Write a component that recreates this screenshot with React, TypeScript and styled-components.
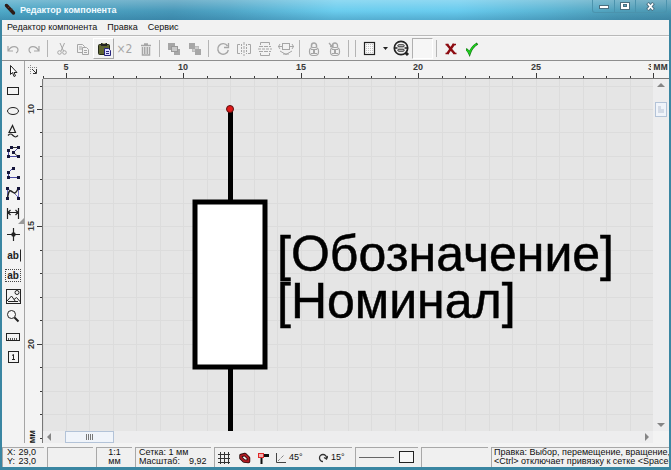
import React, { useEffect, useState } from "react";
import styled, { createGlobalStyle, css } from "styled-components";

const UI_FONT = '"Liberation Sans", Arial, sans-serif';
const DRAW_FONT = '"Liberation Sans", Arial, sans-serif';

const GlobalStyle = createGlobalStyle`
  * { box-sizing: border-box; }
  body { margin: 0; background: #3d87a3; overflow: hidden; }
  button { font: inherit; color: inherit; margin: 0; padding: 0; border: 0; background: none; }
  svg { display: block; }
`;

const Window = styled.div`
  display: flex;
  flex-direction: column;
  height: 100vh;
  padding: 0 2px 3px;
  background: #3a86a2;
  font-family: ${UI_FONT};
  font-size: 9px;
  color: #111;
`;

const TitleBar = styled.header`
  display: flex;
  flex: none;
  height: 20px;
  margin: 0 -2px;
  padding-left: 4px;
  background:
    linear-gradient(180deg, rgba(255, 255, 255, 0.25), rgba(255, 255, 255, 0) 55%, rgba(20, 80, 120, 0.25)),
    linear-gradient(100deg, #4fa9c8 0%, #4798b9 26%, #4fa5c6 34%, #6bcdee 50%, #68cbee 68%, #5ab4d3 82%, #4f9fba 92%, #4b97b2 100%);
`;

const Title = styled.h1`
  flex: 1;
  margin: 0;
  padding-left: 1px;
  font: bold 9px/20px ${DRAW_FONT};
  color: #f2fbff;
`;

const WindowControls = styled.div`
  display: flex;
  height: 13px;
  margin-right: 4px;
  border: 1px solid #4b93ad;
  border-top: 0;
  border-radius: 0 0 3px 3px;
`;

const WindowButton = styled.button<{ $wide?: boolean }>`
  display: grid;
  place-items: center;
  width: ${(p) => (p.$wide ? 31 : 21)}px;
  border-left: 1px solid #4b93ad;
  &:first-child { border-left: 0; }
`;

const MenuBar = styled.nav`
  display: flex;
  flex: none;
  gap: 10px;
  height: 16px;
  padding: 0 5px;
  background: #f2f2f2;
  border-bottom: 1px solid #b9b9b9;
`;

const MenuItem = styled.button`
  line-height: 15px;
`;

const Toolbar = styled.div`
  display: flex;
  flex: none;
  align-items: center;
  height: 25px;
  background: #f2f2f2;
  border-top: 1px solid #fafafa;
  border-bottom: 1px solid #8f8f8f;
`;

const ToolButton = styled.button<{ $look?: "raised" | "sunken"; $narrow?: boolean }>`
  display: grid;
  flex: none;
  place-items: center;
  width: ${(p) => (p.$narrow ? 11 : 21)}px;
  height: 21px;
  border: 1px solid transparent;
  color: #222;
  &:disabled { color: #a6a6a6; }
  ${(p) => p.$look === "raised" && css`border-color: #fff #a8a8a8 #a8a8a8 #fff;`}
  ${(p) => p.$look === "sunken" && css`border-color: #b0b0b0 #fff #fff #b0b0b0; background: #f6f6f6;`}
`;

const Times2 = styled.span`
  font: 12px/16px "DejaVu Sans Condensed", "DejaVu Sans", sans-serif;
`;

const Separator = styled.span`
  flex: none;
  width: 1px;
  height: 17px;
  margin: 0 3px;
  background: #b4b4b4;
`;

const Body = styled.div`
  display: flex;
  flex: 1;
  min-height: 0;
  background: #f3f3f3;
`;

const Palette = styled.aside`
  display: flex;
  flex: none;
  flex-direction: column;
  width: 23px;
  margin-bottom: 4px;
  border-right: 1px solid #a5a5a5;
`;

const PaletteButton = styled.button`
  display: grid;
  flex: none;
  place-items: center;
  height: 20px;
  color: #222;
  &:nth-child(2n + 3) { margin-bottom: 1px; }
`;

const PaletteText = styled.span<{ $boxed?: boolean }>`
  font: bold 10px/11px ${DRAW_FONT};
  padding: 0 1px;
  border: 1px ${(p) => (p.$boxed ? "dotted #444" : "solid transparent")};
  ${(p) => !p.$boxed && css`border-right-color: #222;`}
`;

const Workspace = styled.main`
  display: grid;
  flex: 1;
  min-width: 0;
  margin-bottom: 4px;
  grid-template-columns: 18px minmax(0, 1fr) 16px;
  grid-template-rows: 18px minmax(0, 1fr) 12px;
`;

const Corner = styled.div`
  padding: 4px 3px;
`;

const TopRuler = styled.div`
  position: relative;
  grid-column: 2 / 4;
  border-bottom: 1px solid #777;
`;

const LeftRuler = styled.div`
  position: relative;
  grid-row: 2 / 4;
  min-height: 0;
  border-right: 1px solid #777;
`;

const RulerScale = styled.svg`
  width: 100%;
  height: 100%;
  font: bold 9px ${DRAW_FONT};
  fill: #3a3a3a;
`;

const TopUnit = styled.span`
  position: absolute;
  top: 0;
  right: 0;
  width: 18px;
  padding-right: 1px;
  background: #f3f3f3;
  font: bold 10px/12px ${DRAW_FONT};
  color: #3a3a3a;
  text-align: right;
`;

const LeftUnit = styled.span`
  position: absolute;
  bottom: 0;
  left: 2px;
  background: #f3f3f3;
  writing-mode: vertical-rl;
  transform: rotate(180deg);
  font: bold 9px/10px ${DRAW_FONT};
`;

const Drawing = styled.svg`
  width: 100%;
  height: 100%;
  background: #e5e5e5;
  font: 50px ${DRAW_FONT};
`;

const ScrollTrack = styled.div<{ $vertical?: boolean }>`
  display: flex;
  flex-direction: ${(p) => (p.$vertical ? "column" : "row")};
  align-items: center;
  justify-content: space-between;
  background: #ededee;
`;

const ScrollArrow = styled.button`
  display: grid;
  place-items: center;
  width: 12px;
  height: 12px;
`;

const ScrollThumb = styled.button<{ $vertical?: boolean }>`
  display: grid;
  place-items: center;
  width: ${(p) => (p.$vertical ? 12 : 49)}px;
  height: ${(p) => (p.$vertical ? 15 : 12)}px;
  margin: ${(p) => (p.$vertical ? "11px 0 auto" : "0 auto 0 10px")};
  border: 1px solid #b3c3d8;
  background: #f0f4fa;
`;

const StatusBar = styled.footer`
  display: flex;
  flex: none;
  gap: 3px;
  height: 20px;
  background: #f0f0f0;
`;

const Panel = styled.div<{ $width?: number; $center?: boolean; $pad?: number }>`
  flex: ${(p) => (p.$width ? `0 0 ${p.$width}px` : "1 1 0")};
  min-width: 0;
  overflow: hidden;
  padding: 0 0 0 ${(p) => p.$pad ?? 4}px;
  border-top: 1px solid #a8a8a8;
  border-left: 1px solid #a8a8a8;
  line-height: 9px;
  white-space: pre;
  text-align: ${(p) => (p.$center ? "center" : "left")};
`;

const IconPanel = styled(Panel)`
  display: flex;
  align-items: center;
  padding: 0 4px 0 3px;
`;

const Pair = styled.dl<{ $gap?: number }>`
  display: grid;
  grid-template-columns: auto 1fr;
  column-gap: ${(p) => p.$gap ?? 3}px;
  margin: 0;
  dd { margin: 0; }
`;

const StatusButton = styled.button<{ $width: number }>`
  display: flex;
  flex: none;
  align-items: center;
  gap: 3px;
  width: ${(p) => p.$width}px;
`;

type IconProps = { w?: number; h?: number; children: React.ReactNode };
const Icon = ({ w = 16, h = 16, children }: IconProps) => (
  <svg width={w} height={h} viewBox={`0 0 ${w} ${h}`} fill="none" stroke="currentColor" aria-hidden="true">
    {children}
  </svg>
);

const AppIcon = () => (
  <Icon w={15} h={20}>
    <path d="M1 4l2 2M9 12l2 2" stroke="#5a4030" />
    <path d="M2.500 5.500L9.500 13" stroke="#2c1c18" strokeWidth="3.400" strokeLinecap="round" />
    <path d="M4 8l2-2M6 10.500l2-2" stroke="#7a3a28" strokeWidth="0.800" />
  </Icon>
);

const icons = {
  undo: <Icon><path d="M3 5v5h5M3.500 9.500C6 4.500 13 4.500 13 9c0 1.500-.8 2.500-2 3" strokeWidth="1.200" /></Icon>,
  redo: <Icon><path d="M13 5v5H8M12.500 9.500C10 4.500 3 4.500 3 9c0 1.500.8 2.500 2 3" strokeWidth="1.200" /></Icon>,
  cut: <Icon><path d="M6 2l3.500 8M10.500 2L7 10" /><circle cx="5.500" cy="11.500" r="1.800" /><circle cx="10.500" cy="11.500" r="1.800" /></Icon>,
  copy: <Icon><path d="M2.500 3.500h5l2 2v6h-7zM4 6h3M4 8h3" /><path d="M7.500 6.500h4l2 2v5h-6z" fill="#f2f2f2" /><path d="M9 9.500h3M9 11.500h3" /></Icon>,
  paste: (
    <Icon>
      <rect x="2.500" y="3.500" width="11" height="10" rx="1" fill="#5d6330" stroke="#252a18" />
      <path d="M5 3.500h6" stroke="#222" strokeWidth="3" />
      <path d="M6.500 2.500h3" stroke="#b9bd8c" />
      <path d="M8.500 7.500h4l2 2v5h-6z" fill="#dcdcff" stroke="#27257d" />
      <path d="M10 10.500h3M10 12.500h3" stroke="#27257d" />
    </Icon>
  ),
  trash: <Icon><path d="M3 4.500h10M6 3h4M4.500 6v8h7V6" strokeWidth="1.500" /><path d="M6.500 6v7M8 6v7M9.500 6v7" /></Icon>,
  front: <Icon><path d="M2 2h7v7H2zM8 8h6v6H8z" fill="currentColor" stroke="none" /><rect x="5.500" y="5.500" width="6" height="5" fill="#c9c9c9" stroke="#999" /></Icon>,
  back: <Icon><rect x="5.500" y="5.500" width="6" height="5" fill="#ccc" stroke="#bbb" /><path d="M2 2h6v6H2zM8 8h6v6H8z" fill="currentColor" stroke="none" /></Icon>,
  rotate: <Icon><path d="M12.500 5A5.300 5.300 0 1 0 13.300 9" strokeWidth="1.400" /><path d="M13.500 2v4.500H9" strokeWidth="1.300" /></Icon>,
  flipH: <Icon><path d="M8 1v14" strokeDasharray="3 1" /><path d="M4 3.500H1.500v9H4M12 3.500h2.500v9H12" /><path d="M5.500 3v10M10.500 3v10" strokeDasharray="2 1" /></Icon>,
  flipV: <Icon><path d="M1 8h14" strokeDasharray="3 1" /><path d="M3.500 4V1.500h9V4M3.500 12v2.500h9V12" /><path d="M2 5.500h12M2 10.500h12" strokeDasharray="4 1" /></Icon>,
  connect: <Icon><rect x="4.500" y="2.500" width="7" height="6" /><path d="M0 5.500h4M12 5.500h4M2 3L.5 5.500 2 8M14 3l1.500 2.500L14 8M2 10l6 3.500 6-3.500M5 13h6" /></Icon>,
  lock: <Icon><path d="M5.500 6V4.500a2.500 2.500 0 0 1 5 0V6" strokeWidth="1.500" /><rect x="3.500" y="6.500" width="9" height="8" rx="3.500" strokeWidth="1.200" /><path d="M5 8.500h6M5 12.500h6" /><path d="M8 9v4" strokeWidth="2" /></Icon>,
  unlock: <Icon><path d="M5.500 6V4.500a2.500 2.500 0 0 1 5 0V6M2 2l3.500 4M3 5.500h3V2.500" strokeWidth="1.300" /><rect x="3.500" y="6.500" width="9" height="8" rx="3.500" strokeWidth="1.200" /><path d="M5 8.500h6M5 12.500h6" /><path d="M8 9v4" strokeWidth="2" /></Icon>,
  sheet: (
    <Icon>
      <rect x="2.500" y="1.500" width="10" height="12" fill="#fafafa" stroke="#222" strokeWidth="1.200" />
      <path d="M4 3.500h7M4 5.500h7M4 7.500h7M4 9.500h7M4 11.500h7" stroke="#c4c4c4" strokeDasharray="1 1" />
    </Icon>
  ),
  caret: <Icon w={5} h={3}><path d="M0 0h5L2.500 3z" fill="#222" stroke="none" /></Icon>,
  find: (
    <Icon w={17} h={17}>
      <circle cx="8" cy="8" r="6.700" strokeWidth="1.700" />
      <path d="M1 8h3.500M11.500 8H15" strokeWidth="1.300" />
      <rect x="4.800" y="4.800" width="6.400" height="2" rx="1" />
      <rect x="4.800" y="9.200" width="6.400" height="2" rx="1" />
      <path d="M12.500 12.500l2.500 2.500" strokeWidth="3" />
    </Icon>
  ),
  cancel: <Icon><path d="M4 3.500l7.500 9M11 3L4.500 12.500" stroke="#8d0c12" strokeWidth="2.400" /><path d="M2.500 12.500h3.500M10.500 12.500h3M2.500 3.500h3M9.500 3.500h3.500" stroke="#8d0c12" strokeWidth="1.500" /></Icon>,
  apply: <Icon><path d="M2 8.500c1.500 0 2.500 2 3.500 4C7 8 9.500 5 13.500 2.500" stroke="#137a13" strokeWidth="2.600" /><path d="M2.500 8.700c1.300.3 2.200 1.800 3 3.500C7 8 9.500 5 12.500 3.200" stroke="#1fd01f" strokeWidth="1.500" /></Icon>,
};

type Tool = { label: string; icon?: React.ReactNode; off?: boolean; look?: "raised" | "sunken"; narrow?: boolean };
const toolGroups: Tool[][] = [
  [{ label: "Отменить", icon: icons.undo, off: true }, { label: "Повторить", icon: icons.redo, off: true }],
  [
    { label: "Вырезать", icon: icons.cut, off: true },
    { label: "Копировать", icon: icons.copy, off: true },
    { label: "Вставить", icon: icons.paste, look: "raised" },
    { label: "Дублировать", icon: <Times2>×2</Times2>, off: true },
    { label: "Удалить", icon: icons.trash, off: true },
  ],
  [{ label: "На передний план", icon: icons.front, off: true }, { label: "На задний план", icon: icons.back, off: true }],
  [
    { label: "Повернуть", icon: icons.rotate, off: true },
    { label: "Отразить по горизонтали", icon: icons.flipH, off: true },
    { label: "Отразить по вертикали", icon: icons.flipV, off: true },
    { label: "Развернуть", icon: icons.connect, off: true },
  ],
  [{ label: "Закрепить", icon: icons.lock, off: true }, { label: "Открепить", icon: icons.unlock, off: true }],
  [],
  [
    { label: "Лист", icon: icons.sheet },
    { label: "Параметры листа", icon: icons.caret, narrow: true },
    { label: "Поиск", icon: icons.find },
    { label: "Поле", look: "sunken" },
  ],
  [{ label: "Отмена", icon: icons.cancel }, { label: "Применить", icon: icons.apply }],
];

const Nodes = ({ points }: { points: number[][] }) => (
  <>{points.map(([x, y]) => <rect key={`${x}-${y}`} x={x - 1} y={y - 1} width="3" height="3" fill="#15153a" stroke="none" />)}</>
);

const palette: Tool[] = [
  { label: "Выбор", icon: <Icon><path d="M5.500 2.500v9l2-2 1.500 4 1.500-.7-1.500-3.300h3z" fill="#fff" /></Icon> },
  { label: "Прямоугольник", icon: <Icon><rect x="2.500" y="4.500" width="11" height="7" /></Icon> },
  { label: "Эллипс", icon: <Icon><ellipse cx="8" cy="8" rx="5.500" ry="3.500" /></Icon> },
  { label: "Фигура", icon: <Icon><path d="M7.500 1.500l-3.500 7h6.500zM3 11.500c2-2 3-2 5 0s3 2 5 0" strokeWidth="1.200" /></Icon> },
  {
    label: "Многоугольник",
    icon: <Icon><path d="M3.500 12.500v-6l3-3M8.500 8.500l5-5M13 12.500H4" stroke="#4a4aa5" /><path d="M6.500 3.500h7M8.500 8.500l4.500 4" stroke="#333" /><Nodes points={[[3, 6], [6, 3], [13, 3], [8, 8], [3, 12], [13, 12]]} /></Icon>,
  },
  {
    label: "Ломаная",
    icon: <Icon><path d="M3.500 12.500v-5l5-5M3 12.500h10" stroke="#4a4aa5" /><Nodes points={[[8, 3], [3, 7], [3, 12], [13, 12]]} /></Icon>,
  },
  {
    label: "Кривая",
    icon: <Icon><path d="M2.500 3v10M2 3l5 4M9 8l5 5M13.500 3v10" stroke="#7070c0" /><path d="M2.500 13C4 4 5 5 7.500 7S11 8 13.500 3" strokeWidth="1.500" /><Nodes points={[[2, 3], [2, 13], [13, 3], [13, 13]]} /></Icon>,
  },
  { label: "Размер", icon: <Icon w={22} h={20}><path d="M5.500 4v11M16.500 4v11M6 8.500h10M8.500 6l-2.500 2.500 2.500 2.500M13.500 6l2.500 2.500-2.500 2.500" strokeWidth="1.200" /><path d="M22 14v6h-6z" fill="#999" stroke="none" /></Icon> },
  { label: "Вывод", icon: <Icon><path d="M8.500 2v13M2 8.500h13" strokeWidth="1.200" /><circle cx="8.500" cy="8.500" r="2.200" fill="#222" stroke="none" /></Icon> },
  { label: "Текстовая строка", icon: <PaletteText>ab</PaletteText> },
  { label: "Текст", icon: <PaletteText $boxed>ab</PaletteText> },
  { label: "Изображение", icon: <Icon w={17} h={17}><rect x="1.500" y="1.500" width="14" height="14" /><circle cx="12" cy="4.500" r="2" /><path d="M2 13l4.500-5 4 5.500M9 11.500l2.500-2 4 4.500M3 13.500h10" /></Icon> },
  { label: "Масштаб", icon: <Icon><circle cx="6.500" cy="6.500" r="4" fill="#f8f8f8" /><path d="M9.500 9.500l4 4" strokeWidth="2" /></Icon> },
  { label: "Линейка", icon: <Icon><rect x="1.500" y="4.500" width="13" height="7" /><path d="M3.500 11V9M5.500 11V9M7.500 11V9M9.500 11V9M11.500 11V9" stroke="#555" /></Icon> },
  { label: "Нумерация", icon: <Icon><rect x="3.500" y="2.500" width="10" height="11" /><path d="M7 6.500l1.500-1V11M7 10.500h3" /></Icon> },
];

/* Scale of the sheet: five millimetres cover 117.4 screen pixels. */
const MM = 117.4 / 5;
const xAt = (i: number) => Math.round(23 + (i - 1) * MM);
const yAt = (i: number) => Math.round(30 + (i - 1) * MM);

const useSteps = () => {
  const [size, setSize] = useState({ w: window.innerWidth, h: window.innerHeight });
  useEffect(() => {
    const update = () => setSize({ w: window.innerWidth, h: window.innerHeight });
    window.addEventListener("resize", update);
    return () => window.removeEventListener("resize", update);
  }, []);
  const range = (length: number) => Array.from({ length: Math.max(0, Math.floor(length / MM) + 1) }, (_, i) => i);
  return { columns: range(size.w - 43), rows: range(size.h - 110) };
};

const HorizontalScale = ({ steps }: { steps: number[] }) => (
  <RulerScale>
    {steps.map((i) => {
      const value = i + 4;
      const major = value % 5 === 0;
      return (
        <g key={i}>
          <rect x={xAt(i)} y={major ? 12 : 15} width="1" height={major ? 5 : 2} />
          {major && <text x={xAt(i)} y="9" textAnchor="middle">{value}</text>}
        </g>
      );
    })}
  </RulerScale>
);

const VerticalScale = ({ steps }: { steps: number[] }) => (
  <RulerScale>
    {steps.map((i) => {
      const value = i + 9;
      const major = value % 5 === 0;
      return (
        <g key={i}>
          <rect x={major ? 12 : 15} y={yAt(i)} width={major ? 5 : 2} height="1" />
          {major && <text transform={`translate(9 ${yAt(i)}) rotate(-90)`} textAnchor="middle">{value}</text>}
        </g>
      );
    })}
  </RulerScale>
);

const Sheet = ({ columns, rows }: { columns: number[]; rows: number[] }) => (
  <Drawing role="img" aria-label="Компонент">
    <g fill="#dcdcdc">
      {columns.map((i) => <rect key={`v${i}`} x={xAt(i)} width="1" height="100%" />)}
      {rows.map((i) => <rect key={`h${i}`} y={yAt(i)} width="100%" height="1" />)}
    </g>
    <path d="M187.500 30V352" stroke="#000" strokeWidth="5" />
    <rect x="152" y="123" width="70" height="165" fill="#fff" stroke="#000" strokeWidth="5" />
    <circle cx="187" cy="30" r="3.500" fill="#e01818" stroke="#5a1010" />
    <g stroke="#000" strokeWidth="0.500">
      <text x="234" y="192">[Обозначение]</text>
      <text x="234" y="239">[Номинал]</text>
    </g>
  </Drawing>
);

const Arrow = ({ d }: { d: string }) => (
  <Icon w={8} h={8}><path d={d} fill="#858585" stroke="none" /></Icon>
);

export default function App() {
  const { columns, rows } = useSteps();
  return (
    <Window>
      <GlobalStyle />
      <TitleBar>
        <AppIcon />
        <Title>Редактор компонента</Title>
        <WindowControls>
          <WindowButton aria-label="Свернуть"><Icon w={10} h={8}><rect x="0.500" y="3.500" width="9" height="3" fill="#fff" stroke="#4b6f80" /></Icon></WindowButton>
          <WindowButton aria-label="Развернуть окно"><Icon w={10} h={8}><rect x="0.500" y="0.500" width="9" height="7" fill="#fff" stroke="#4b6f80" /><rect x="3.500" y="2.500" width="3" height="2" fill="#5ba5bf" stroke="#4b6f80" /></Icon></WindowButton>
          <WindowButton $wide aria-label="Закрыть"><Icon w={10} h={9}><path d="M1.500 1l6 7M7.500 1l-6 7" stroke="#4b6f80" strokeWidth="3.500" /><path d="M2 1.500l5 6M7 1.500l-5 6" stroke="#fff" strokeWidth="1.800" /></Icon></WindowButton>
        </WindowControls>
      </TitleBar>
      <MenuBar>
        <MenuItem>Редактор компонента</MenuItem>
        <MenuItem>Правка</MenuItem>
        <MenuItem>Сервис</MenuItem>
      </MenuBar>
      <Toolbar role="toolbar">
        {toolGroups.map((group, index) => (
          <React.Fragment key={index}>
            {index > 0 && <Separator />}
            {group.map((tool) => (
              <ToolButton key={tool.label} aria-label={tool.label} disabled={tool.off} $look={tool.look} $narrow={tool.narrow}>
                {tool.icon}
              </ToolButton>
            ))}
          </React.Fragment>
        ))}
      </Toolbar>
      <Body>
        <Palette>
          {palette.map((tool) => (
            <PaletteButton key={tool.label} aria-label={tool.label}>{tool.icon}</PaletteButton>
          ))}
        </Palette>
        <Workspace>
          <Corner>
            <Icon w={12} h={12}><path d="M0 2.500h10M2.500 0v10" stroke="#888" strokeDasharray="1 1" /><path d="M4 4l4 4M8.500 4v4.500H5" stroke="#333" /></Icon>
          </Corner>
          <TopRuler><HorizontalScale steps={columns} /><TopUnit>мм</TopUnit></TopRuler>
          <LeftRuler><VerticalScale steps={rows} /><LeftUnit>мм</LeftUnit></LeftRuler>
          <Sheet columns={columns} rows={rows} />
          <ScrollTrack $vertical>
            <ScrollArrow aria-label="Вверх"><Arrow d="M0 6l4-4 4 4z" /></ScrollArrow>
            <ScrollThumb $vertical aria-label="Вертикальная прокрутка"><Icon w={6} h={7}><path d="M0 0h3v3h3v4H0z" fill="#d3dae6" stroke="none" /></Icon></ScrollThumb>
            <ScrollArrow aria-label="Вниз"><Arrow d="M0 2h8L4 6z" /></ScrollArrow>
          </ScrollTrack>
          <ScrollTrack>
            <ScrollArrow aria-label="Влево"><Arrow d="M6 0v8L2 4z" /></ScrollArrow>
            <ScrollThumb aria-label="Горизонтальная прокрутка"><Icon w={7} h={6}><path d="M0.500 0v6M2.500 0v6M4.500 0v6M6.500 0v6" stroke="#777" /></Icon></ScrollThumb>
            <ScrollArrow aria-label="Вправо"><Arrow d="M2 0v8l4-4z" /></ScrollArrow>
          </ScrollTrack>
        </Workspace>
      </Body>
      <StatusBar>
        <Panel $width={42}><Pair><dt>X:</dt><dd>29,0</dd><dt>Y:</dt><dd>23,0</dd></Pair></Panel>
        <Panel $width={46} />
        <Panel $width={36} $center $pad={0}>{"1:1\nмм"}</Panel>
        <Panel $width={76} $pad={3}>{"Сетка: 1 мм"}<Pair $gap={9}><dt>Масштаб:</dt><dd>9,92</dd></Pair></Panel>
        <IconPanel $width={138}>
          <StatusButton $width={20} aria-label="Сетка"><Icon w={12} h={12}><path d="M2.500 0v12M6.500 0v12M10.500 0v12M0 2.500h12M0 6.500h12M0 10.500h12" stroke="#333" /></Icon></StatusButton>
          <StatusButton $width={19} aria-label="Привязка"><Icon w={13} h={12}><path d="M3 3.500L7 2.500 10.500 6v3.500L6 9 3 6z" stroke="#2d0c0c" strokeWidth="3.500" strokeLinejoin="round" /><path d="M3 3.500L7 2.500 10.500 6v3.500L6 9 3 6z" stroke="#b11a22" strokeWidth="1.800" strokeLinejoin="round" /></Icon></StatusButton>
          <StatusButton $width={18} aria-label="Автопривязка"><Icon w={12} h={12}><path d="M5 3.500h7" stroke="#111" strokeWidth="3" /><path d="M4.500 5v7" stroke="#111" strokeWidth="2" /><rect x="1.500" y="1.500" width="5" height="4" stroke="#e02828" fill="#f2b0b0" /></Icon></StatusButton>
          <StatusButton $width={43}><Icon w={11} h={12}><path d="M1.500 1v9.500H11" stroke="#444" /><path d="M3 9l6-6" stroke="#555" strokeDasharray="1 1" /></Icon>45°</StatusButton>
          <StatusButton $width={32}><Icon w={10} h={12}><path d="M5 9.500A3.500 3.500 0 1 1 8.500 6M6 5.500l2.500 1.500L10 4" stroke="#333" strokeWidth="1.300" /></Icon>15°</StatusButton>
        </IconPanel>
        <IconPanel $width={63}>
          <StatusButton $width={40} aria-label="Линия"><Icon w={35} h={3}><path d="M0 1.500h35" stroke="#666" /></Icon></StatusButton>
          <StatusButton $width={15} aria-label="Заливка"><Icon w={15} h={13}><rect x="0.500" y="0.500" width="14" height="11" stroke="#222" fill="#f6f6f6" /></Icon></StatusButton>
        </IconPanel>
        <Panel $width={67} />
        <Panel $pad={2}>{"Правка: Выбор, перемещение, вращение, удаление\n<Ctrl> отключает привязку к сетке <Space>"}</Panel>
      </StatusBar>
    </Window>
  );
}
